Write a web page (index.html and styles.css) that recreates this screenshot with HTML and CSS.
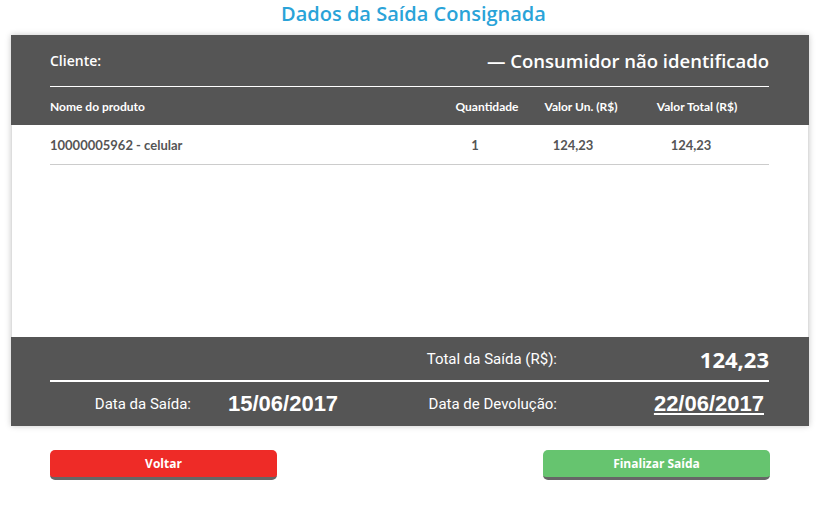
FILE: index.html
```html
<!DOCTYPE html>
<html lang="pt-BR">
<head>
  <meta charset="UTF-8" />
  <title>Dados da Saída Consignada</title>
  <link rel="stylesheet" href="styles.css">
</head>
<body>

  <h1 class="page-title">Dados da Saída Consignada</h1>

  <div class="card">
    <div class="card-head">
      <div class="client-row">
        <span class="client-label">Cliente:</span>
        <span class="client-name">— Consumidor não identificado</span>
      </div>
      <div class="cols cols-head">
        <span>Nome do produto</span>
        <span class="center">Quantidade</span>
        <span class="center">Valor Un. (R$)</span>
        <span class="center">Valor Total (R$)</span>
      </div>
    </div>

    <div class="card-body">
      <div class="cols item-row">
        <span>10000005962 - celular</span>
        <span class="center">1</span>
        <span class="center">124,23</span>
        <span class="center">124,23</span>
      </div>
    </div>

    <div class="card-foot">
      <span class="foot-label total-label">Total da Saída (R$):</span>
      <span class="total-value">124,23</span>
      <div class="foot-divider"></div>
      <span class="foot-label">Data da Saída:</span>
      <span class="date-value">15/06/2017</span>
      <span class="foot-label">Data de Devolução:</span>
      <span class="date-value return-date">22/06/2017</span>
    </div>
  </div>

  <div class="actions">
    <button class="btn btn-back">Voltar</button>
    <button class="btn btn-finish">Finalizar Saída</button>
  </div>

</body>
</html>
```

FILE: styles.css
```css
body {
  margin: 0;
  font-family: 'Open Sans', sans-serif;
  background: #fff;
  color: #555;
}

.page-title {
  margin: 0;
  height: 28px;
  line-height: 28px;
  text-align: center;
  font-size: 20px;
  font-weight: 600;
  color: #2aa3d8;
}

.card {
  width: 798px;
  margin: 7px 0 0 11px;
  box-shadow: 0 0 6px rgba(0, 0, 0, 0.22);
}

.card-head {
  background: #555;
  color: #fff;
  padding: 0 40px 0 39px;
}

.client-row {
  display: flex;
  justify-content: space-between;
  align-items: center;
  height: 51px;
  border-bottom: 1px solid #fff;
}

.client-label {
  font-size: 14px;
  font-weight: 600;
}

.client-name {
  font-size: 18.5px;
  font-weight: 600;
}

.cols {
  display: grid;
  grid-template-columns: 1fr 94px 94px 138px 3px;
  align-items: center;
}

.cols .center {
  text-align: center;
}

.cols-head {
  height: 38px;
  font-family: Lato, sans-serif;
  font-size: 12px;
  font-weight: 700;
}

.card-body {
  height: 212px;
  background: #fff;
  border-left: 1px solid #ddd;
  border-right: 1px solid #ddd;
  padding: 0 39px 0 38px;
}

.item-row {
  grid-template-columns: 1fr 78px 118px 118px 19px;
  height: 39px;
  border-bottom: 1px solid #ccc;
  font-family: Lato, sans-serif;
  font-size: 13px;
  font-weight: 700;
  color: #555;
}

.card-foot {
  display: grid;
  grid-template-columns: 141px 219px 147px 1fr;
  grid-template-rows: 43px 2px 44px;
  align-items: center;
  background: #555;
  color: #fff;
  padding: 0 40px 0 39px;
}

.foot-label {
  text-align: right;
  font-family: Roboto, sans-serif;
  font-size: 15px;
}

.total-label {
  grid-column: 3;
}

.total-value {
  text-align: right;
  font-size: 22px;
  font-weight: 700;
}

.foot-divider {
  grid-column: 1 / -1;
  height: 2px;
  background: #fff;
}

.date-value {
  padding-left: 37px;
  font-family: 'Liberation Sans', Arial, sans-serif;
  font-size: 22px;
  font-weight: 700;
}

.return-date {
  padding: 0 5px 0 0;
  text-align: right;
  text-decoration: underline;
}

.actions {
  display: flex;
  justify-content: space-between;
  padding: 24px 57px 0 50px;
}

.btn {
  width: 227px;
  height: 30px;
  padding: 0;
  border: none;
  border-bottom: 3px solid #666;
  border-radius: 5px;
  color: #fff;
  font-family: 'Open Sans', sans-serif;
  font-size: 12px;
  font-weight: 700;
  cursor: pointer;
}

.btn-back {
  background: #ee2b27;
}

.btn-finish {
  background: #66c46f;
}
```
